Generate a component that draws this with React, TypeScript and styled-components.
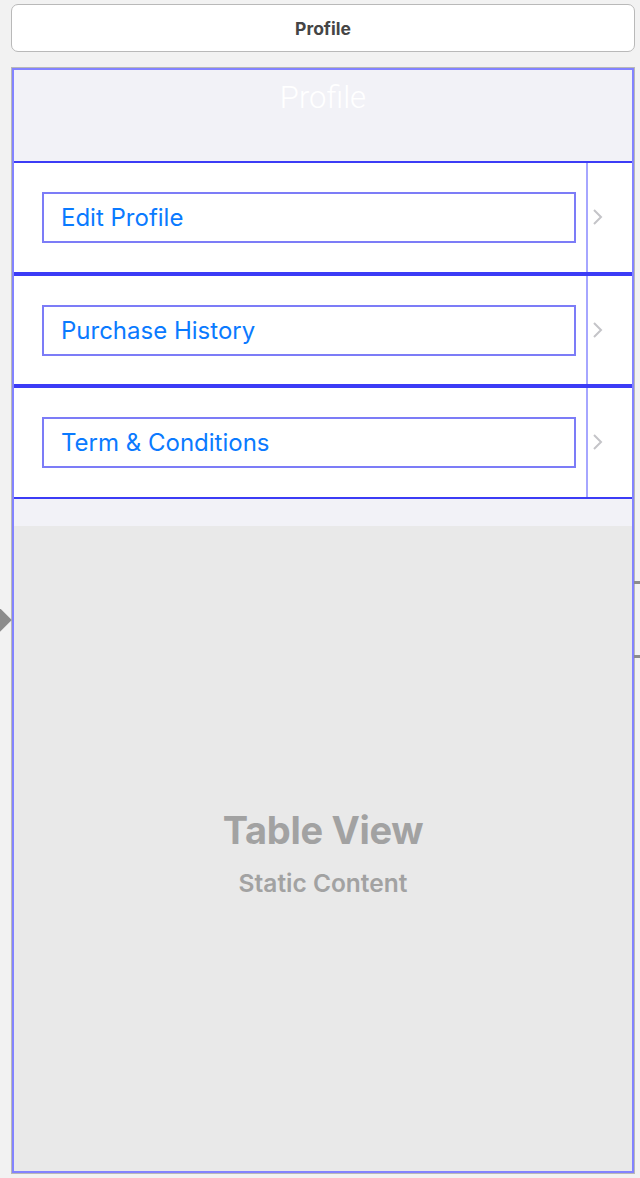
import React from "react";
import styled, { createGlobalStyle } from "styled-components";

const GlobalStyle = createGlobalStyle`
  html, body { margin: 0; padding: 0; background: #f2f2f2; }
  body { font-family: "Inter", "Roboto", "Liberation Sans", sans-serif; }
  * { box-sizing: border-box; }
`;

const Canvas = styled.div`
  position: relative;
  width: 640px;
  height: 1178px;
  padding: 4px 5px 0 11px;
  display: flex;
  flex-direction: column;
`;

const TitleButton = styled.div`
  height: 48px;
  border: 1px solid #b9b9b9;
  border-radius: 7px;
  background: #ffffff;
  display: flex;
  align-items: center;
  justify-content: center;
  font-family: "Inter", "Roboto", "Liberation Sans", sans-serif;
  font-weight: 700;
  font-size: 17.5px;
  color: #454545;
`;

const Scene = styled.div`
  position: relative;
  margin-top: 15px;
  height: 1107px;
  border: 1px solid #b8b8b8;
  display: flex;
  flex-direction: column;
  background: #e9e9e9;
`;

const FrameOverlay = styled.div`
  position: absolute;
  inset: 0;
  border: 2px solid #8383ff;
  pointer-events: none;
`;

const NavBar = styled.div`
  height: 93px;
  background: #f2f2f7;
  display: flex;
  justify-content: center;
  padding-top: 11px;
  font-family: "Roboto", "Liberation Sans", sans-serif;
  font-weight: 300;
  font-size: 31px;
  color: #ffffff;
  line-height: 38px;
`;

const Cells = styled.div`
  display: flex;
  flex-direction: column;
  background: #f2f2f7;
  padding-bottom: 27px;
`;

const Cell = styled.div`
  height: 112.5px;
  border: 2px solid #3c3cf6;
  background: #ffffff;
  display: flex;
`;

const CellContent = styled.div`
  flex: 1;
  padding: 29px 10px 0 28px;
`;

const LabelBox = styled.div`
  height: 51px;
  border: 2px solid #7c7cf7;
  display: flex;
  align-items: center;
  padding-left: 17px;
  font-size: 24px;
  color: #0a7aff;
  font-weight: 400;
`;

const Accessory = styled.div`
  width: 46px;
  border-left: 2px solid #a6a6ff;
  display: flex;
  align-items: center;
  padding-left: 4px;
`;

const Placeholder = styled.div`
  flex: 1;
  background: #e9e9e9;
  display: flex;
  flex-direction: column;
  align-items: center;
  justify-content: center;
  padding-top: 6px;
  color: #a2a2a2;
`;

const PlaceholderTitle = styled.div`
  font-size: 38px;
  font-weight: 700;
  line-height: 46px;
  letter-spacing: -0.3px;
`;

const PlaceholderSub = styled.div`
  margin-top: 15px;
  font-size: 24.5px;
  line-height: 30px;
  font-weight: 600;
`;

const EntryArrow = styled.div`
  position: absolute;
  left: -10px;
  top: 611px;
  width: 18px;
  height: 18px;
  background: #8c8c8c;
  transform: rotate(45deg);
`;

const SegueStub = styled.div<{ $top: number }>`
  position: absolute;
  right: 0;
  top: ${(p) => p.$top}px;
  width: 6px;
  height: 3px;
  background: #8c8c8c;
`;

const Chevron = () => (
  <svg width="12" height="18" viewBox="0 0 12 18">
    <path d="M2 2 L9 9 L2 16" fill="none" stroke="#c4c4c8" strokeWidth="2" />
  </svg>
);

const items = ["Edit Profile", "Purchase History", "Term & Conditions"];

export default function App() {
  return (
    <>
      <GlobalStyle />
      <Canvas>
        <TitleButton>Profile</TitleButton>
        <Scene>
          <NavBar>Profile</NavBar>
          <Cells>
            {items.map((t) => (
              <Cell key={t}>
                <CellContent>
                  <LabelBox>{t}</LabelBox>
                </CellContent>
                <Accessory>
                  <Chevron />
                </Accessory>
              </Cell>
            ))}
          </Cells>
          <Placeholder>
            <PlaceholderTitle>Table View</PlaceholderTitle>
            <PlaceholderSub>Static Content</PlaceholderSub>
          </Placeholder>
          <FrameOverlay />
        </Scene>
        <EntryArrow />
        <SegueStub $top={581} />
        <SegueStub $top={655} />
      </Canvas>
    </>
  );
}
